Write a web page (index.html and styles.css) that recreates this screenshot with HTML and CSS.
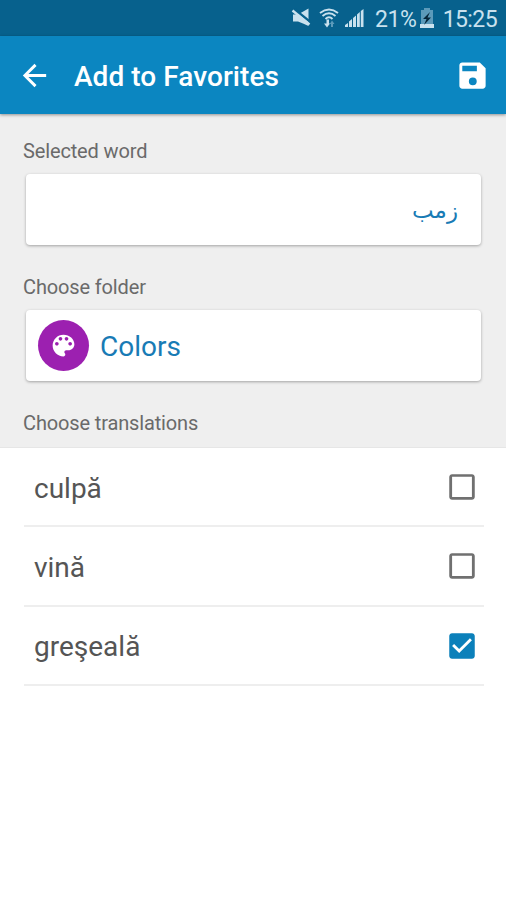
FILE: index.html
```html
<!DOCTYPE html>
<html lang="en">
<head>
<meta charset="utf-8">
<title>Add to Favorites</title>
<link rel="stylesheet" href="styles.css">
</head>
<body>
<div class="status">
  <svg class="mute" width="20" height="20" viewBox="0 0 20 20"><path d="M2 6.500H7L17.500 0.500V18L12 15.500L7 13.500H2Z"/><path class="slash" d="M2.500 0.500L20 14.500"/><path class="bar" d="M1.500 2.500L18.500 16.500"/></svg>
  <svg class="wifi" width="20" height="20" viewBox="0 0 20 20"><path class="arc" d="M1 5Q10-2 19 5M3.500 8Q10 2.500 16.500 8M6.500 11Q10 7.500 13.500 11"/><path d="M7.500 11.500H10V15.500H11L8 19.500L5 15.500H7.500Z"/><path class="dim" d="M12 19V16H10.800L13 12.500L15.500 16H14V19Z"/></svg>
  <svg class="signal" width="20" height="20" viewBox="0 0 20 20"><path d="M0 19V17L3 15V19ZM4 19V13.500L7 11V19ZM8 19V10L11 7.500V19ZM12 19V6.500L14.800 4V19ZM15.800 19V3L18.500 1V19Z"/></svg>
  <span class="percent">21%</span>
  <svg class="battery" width="14" height="20" viewBox="0 0 14 20"><path class="shell" d="M4 0H10V2H13V20H1V2H4Z"/><path d="M0 16H14V20H0Z"/><path class="bolt" d="M10 4L3 11H6.500L4 17L11 9.500H7.500Z"/></svg>
  <span class="clock">15:25</span>
</div>
<header class="appbar">
  <svg class="back" width="35" height="35" viewBox="0 0 24 24"><path d="M20 11H7.830l5.590-5.590L12 4l-8 8 8 8 1.410-1.410L7.830 13H20v-2z"/></svg>
  <h1>Add to Favorites</h1>
  <svg class="save" width="35" height="35" viewBox="0 0 24 24"><path d="M17 3H5c-1.110 0-2 .9-2 2v14c0 1.100.89 2 2 2h14c1.100 0 2-.9 2-2V7l-4-4zM12.200 18.700a2.700 2.700 0 1 1 0-5.400a2.700 2.700 0 0 1 0 5.400zM15 9H5V5.300h10V9z"/></svg>
</header>
<main class="form">
  <div class="label">Selected word</div>
  <div class="card"><span class="word" lang="ar" dir="rtl">زمب</span></div>
  <div class="label">Choose folder</div>
  <div class="card">
    <span class="disc"><svg width="29" height="29" viewBox="0 0 24 24"><path d="M12 3c-4.970 0-9 4.030-9 9s4.030 9 9 9c.83 0 1.500-.67 1.500-1.500 0-.39-.15-.74-.39-1.010-.23-.26-.38-.61-.38-.99 0-.83.67-1.500 1.500-1.500H16c2.760 0 5-2.240 5-5 0-4.420-4.030-8-9-8zm-5.500 9c-.83 0-1.500-.67-1.500-1.500S5.670 9 6.500 9 8 9.670 8 10.500 7.330 12 6.500 12zm3-4C8.670 8 8 7.330 8 6.500S8.670 5 9.500 5s1.500.67 1.500 1.500S10.330 8 9.500 8zm5 0c-.83 0-1.500-.67-1.500-1.500S13.670 5 14.500 5s1.500.67 1.500 1.500S15.330 8 14.500 8zm3 4c-.83 0-1.500-.67-1.500-1.500S16.670 9 17.500 9s1.500.67 1.500 1.500-.67 1.500-1.500 1.500z"/></svg></span>
    <span class="folder">Colors</span>
  </div>
  <div class="label">Choose translations</div>
</main>
<ul class="list">
  <li><span>culpă</span><svg class="box" width="34" height="34" viewBox="0 0 24 24"><path d="M19 4.700v14.300H5V4.700h14m0-1.700H5c-1.100 0-2 .9-2 2v14c0 1.100.9 2 2 2h14c1.100 0 2-.9 2-2V5c0-1.100-.9-2-2-2z"/></svg></li>
  <li><span>vină</span><svg class="box" width="34" height="34" viewBox="0 0 24 24"><path d="M19 4.700v14.300H5V4.700h14m0-1.700H5c-1.100 0-2 .9-2 2v14c0 1.100.9 2 2 2h14c1.100 0 2-.9 2-2V5c0-1.100-.9-2-2-2z"/></svg></li>
  <li><span>greşeală</span><svg class="box checked" width="34" height="34" viewBox="0 0 24 24"><path d="M19 3H5c-1.110 0-2 .9-2 2v14c0 1.100.89 2 2 2h14c1.110 0 2-.9 2-2V5c0-1.100-.89-2-2-2zm-9 14l-5-5 1.410-1.410L10 14.170l7.590-7.590L19 8l-9 9z"/></svg></li>
</ul>
</body>
</html>
```
FILE: styles.css
```css
* { box-sizing: border-box; }
body { margin: 0; height: 900px; overflow: hidden; background: #fff; font-family: Roboto, "Noto Sans", sans-serif; }
svg { display: block; flex: none; }
.status { height: 36px; display: flex; align-items: center; padding: 0 9px 0 291px; background: #07618d; color: #c9e1ee; fill: #c9e1ee; font-size: 23px; white-space: nowrap; }
.slash { stroke: #07618d; stroke-width: 2.5; }
.bar { stroke: #c9e1ee; stroke-width: 2.4; }
.wifi { margin-left: 8px; }
.arc { fill: none; stroke: #c9e1ee; stroke-width: 1.9; }
.dim { fill: #5c9aba; }
.signal { margin-left: 6px; }
.percent { margin: 3px 0 0 10px; width: 41px; letter-spacing: -0.4px; }
.battery { margin-left: 4px; }
.shell { fill: #5c9aba; }
.bolt { fill: #06263a; }
.clock { margin: 3px 0 0 auto; letter-spacing: -0.6px; }
.appbar { position: relative; height: 78px; display: flex; align-items: center; padding: 0 16px 0 17px; background: #0b86c1; color: #fff; fill: #fff; box-shadow: 0 1px 3px rgba(0,0,0,.4); }
.appbar h1 { margin: 3px auto 0 22px; font-size: 28px; line-height: 36px; font-weight: 500; letter-spacing: .05px; white-space: nowrap; }
.form { height: 334px; padding: 14px 25px 0 26px; background: #efefef; border-bottom: 1px solid #e6e6e6; }
.label { height: 46px; margin-left: -3px; line-height: 46px; font-size: 20px; letter-spacing: -.14px; color: #6a6a6a; white-space: nowrap; }
.card { height: 71px; margin-bottom: 19px; display: flex; align-items: center; padding: 0 23px 0 12px; background: #fff; border-radius: 4px; box-shadow: 0 1px 3px rgba(0,0,0,.32); color: #187bb5; }
.word { margin-left: auto; font-family: "DejaVu Sans", sans-serif; font-size: 23px; }
.disc { width: 51px; height: 51px; display: flex; align-items: center; justify-content: center; border-radius: 50%; background: #9c20b0; fill: #fff; }
.folder { margin: 2px 0 0 11px; font-size: 28px; }
.list { margin: 0 22px 0 24px; padding: 0; list-style: none; }
.list li { height: 79.300px; display: flex; align-items: center; justify-content: space-between; padding: 1px 5px 0 10px; border-bottom: 2px solid #eee; font-size: 28px; color: #555; }
.list span { margin-top: 2px; }
.box { fill: #707070; }
.checked { fill: #0b80ba; }
```
